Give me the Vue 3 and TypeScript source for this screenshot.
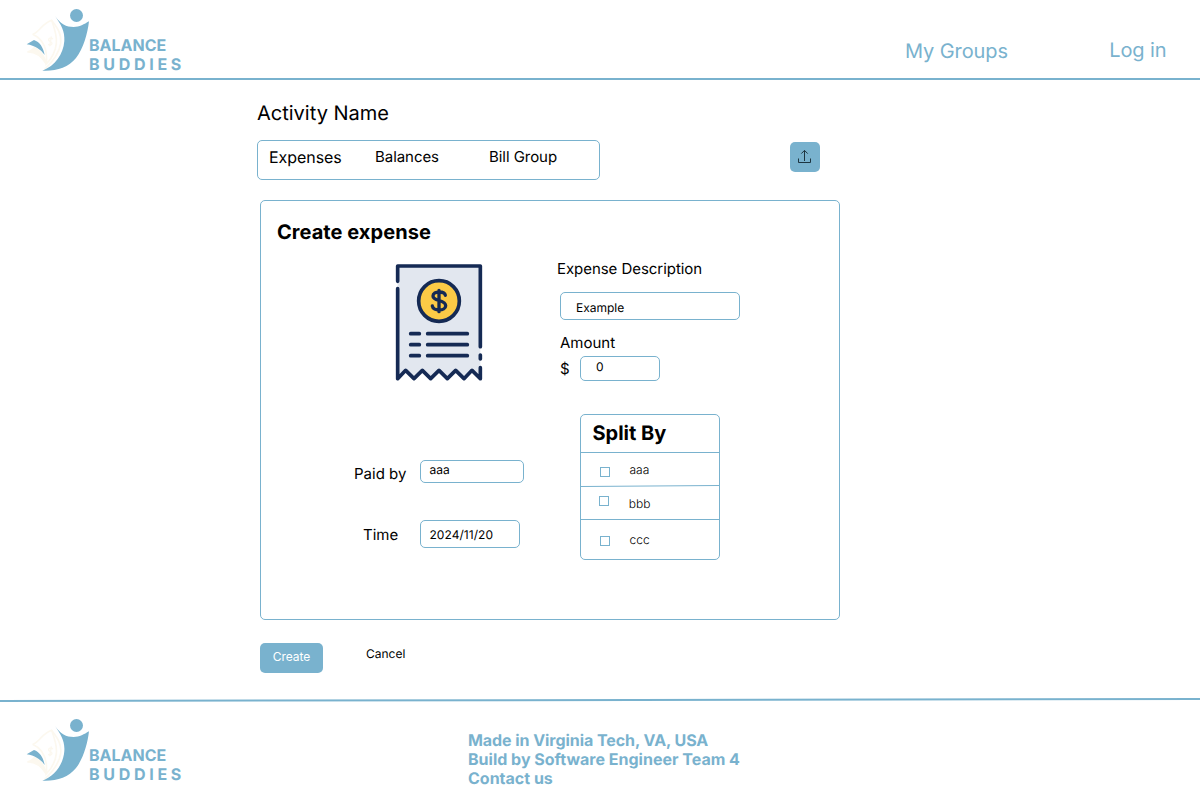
<script setup lang="ts">
import { defineComponent, h, ref } from 'vue'

interface Member {
  name: string
  row: string
}

const tabs: { label: string; key: string }[] = [
  { label: 'Expenses', key: 'expenses' },
  { label: 'Balances', key: 'balances' },
  { label: 'Bill Group', key: 'bill-group' },
]
const members: Member[] = [
  { name: 'aaa', row: 'first' },
  { name: 'bbb', row: 'second' },
  { name: 'ccc', row: 'third' },
]
const footerLines: string[] = [
  'Made in Virginia Tech, VA, USA',
  'Build by Software Engineer Team 4',
  'Contact us',
]
const description = ref('Example')
const amount = ref('0')
const payer = ref('aaa')
const date = ref('2024/11/20')

const cream = { fill: 'none', stroke: '#fcf8ef', 'stroke-width': 5 }
const LogoMark = defineComponent({
  render: () =>
    h('svg', { width: 69, height: 78, viewBox: '0 0 207 234' }, [
      h('path', { ...cream, d: 'M38 103C58 97 64 72 95 61C106 76 126 98 122 130C118 160 98 185 74 208' }),
      h('path', { ...cream, d: 'M38 103C64 115 84 140 79 192C98 172 107 151 109 130C112 108 103 84 95 61' }),
      h('path', { ...cream, d: 'M22 156C34 154 38 147 43 143C58 149 73 165 79 192C63 166 45 155 22 156Z', fill: '#fcf8ef' }),
      h('path', { ...cream, 'stroke-width': 4, d: 'M99 117C89 109 80 120 90 124C101 128 95 140 84 133M94 109L89 139' }),
      h('path', { fill: '#79b2ce', d: 'M20 133L42 120C59 126 70 142 74 165C62 148 45 137 20 133Z' }),
      h('circle', { fill: '#79b2ce', cx: 169.5, cy: 46.5, r: 19.5 }),
      h('path', {
        fill: '#79b2ce',
        d: 'M105 48C121 72 139 81 161 81C179 81 192 73 207 64C203 101 190 146 168 174C145 203 108 214 67 212C105 198 130 163 133 123C135 93 123 74 105 48Z',
      }),
    ]),
})
</script>

<template>
  <div class="page">
    <header class="header">
      <div class="brand">
        <LogoMark />
        <div class="brand-name"><span class="balance">BALANCE</span><span class="buddies">BUDDIES</span></div>
      </div>
      <nav class="nav">
        <a class="groups">My Groups</a>
        <a class="login">Log in</a>
      </nav>
    </header>

    <main class="main">
      <h1 class="activity">Activity Name</h1>
      <div class="toolbar">
        <div class="tabs">
          <span v-for="tab in tabs" :key="tab.key" :class="['tab', tab.key]">{{ tab.label }}</span>
        </div>
        <button class="share" aria-label="Share">
          <svg width="30" height="30" viewBox="0 0 30 30" fill="none" stroke="#1d3541" stroke-width="1">
            <path d="M14.5 19V8.5M11.3 11.6L14.5 8.4L17.7 11.6M8.5 16.5V20.5H20.5V16.5" />
          </svg>
        </button>
      </div>

      <section class="card">
        <h2 class="title">Create expense</h2>
        <div class="columns">
          <div class="left">
            <svg class="receipt" width="110" height="135" viewBox="0 0 330 405" fill="none" stroke="#152a54" stroke-width="11" stroke-linecap="round" stroke-linejoin="round">
              <path fill="#e2e7ef" stroke="none" d="M38 33H286V371L261 346L237 371L212 346L187 371L162 346L137 371L112 346L87 371L62 346L38 371Z" />
              <path d="M38 79V33H286V275M286 300V312M286 338V371L261 346L237 371L212 346L187 371L162 346L137 371L112 346L87 371L62 346L38 371V101" />
              <circle cx="162" cy="138" r="61" fill="#fbca46" />
              <path stroke-width="10" d="M181 121C179 108 144 107 144 123C144 140 182 133 182 152C182 169 144 169 142 153M162 106V170" />
              <path d="M77 236H103M128 236H247M77 269H103M128 269H247M77 302H103M128 302H247" />
            </svg>
            <div class="field paid">
              <span class="label">Paid by</span>
              <div class="box payer">{{ payer }}</div>
            </div>
            <div class="field time">
              <span class="label">Time</span>
              <div class="box date">{{ date }}</div>
            </div>
          </div>
          <div class="right">
            <span class="label description-label">Expense Description</span>
            <div class="box description">{{ description }}</div>
            <span class="label amount-label">Amount</span>
            <div class="amount-row">
              <span class="label">$</span>
              <div class="box amount">{{ amount }}</div>
            </div>
            <div class="split">
              <h3 class="split-title">Split By</h3>
              <div v-for="member in members" :key="member.name" :class="['member', member.row]">
                <svg v-if="member.row === 'second'" class="divider" width="138" height="2" viewBox="0 0 138 2">
                  <path d="M0 1.5L138 .5" stroke="#79b2ce" />
                </svg>
                <i class="check"></i>
                <span class="member-name">{{ member.name }}</span>
              </div>
            </div>
          </div>
        </div>
      </section>

      <div class="actions">
        <button class="create">Create</button>
        <a class="cancel">Cancel</a>
      </div>
    </main>

    <footer class="footer">
      <svg class="rule" width="1200" height="4" viewBox="0 0 1200 4">
        <path d="M0 3L1200 1" stroke="#79b2ce" stroke-width="2" />
      </svg>
      <div class="footer-content">
        <div class="brand">
          <LogoMark />
          <div class="brand-name"><span class="balance">BALANCE</span><span class="buddies">BUDDIES</span></div>
        </div>
        <div class="footer-text">
          <span v-for="line in footerLines" :key="line">{{ line }}</span>
        </div>
      </div>
    </footer>
  </div>
</template>

<style>
body {
  margin: 0;
  background: #fff;
}
</style>

<style scoped>
* {
  box-sizing: border-box;
}
.page {
  width: 1200px;
  height: 800px;
  overflow: hidden;
  display: flex;
  flex-direction: column;
  background: #fff;
  color: #000;
  font-family: Inter, sans-serif;
  text-rendering: geometricPrecision;
}
svg {
  display: block;
  flex: none;
}
h1,
h2,
h3 {
  margin: 0;
}
button {
  border: 0;
  padding: 0;
  font-family: inherit;
}
.header {
  height: 80px;
  flex: none;
  display: flex;
  justify-content: space-between;
  border-bottom: 2px solid #79b2ce;
}
.brand {
  display: flex;
  padding-left: 20px;
  height: 78px;
}
.brand-name {
  display: flex;
  flex-direction: column;
  padding-top: 36px;
  color: #79b2ce;
  font-size: 16px;
  line-height: 19px;
  font-weight: 700;
}
.buddies {
  letter-spacing: 3.7px;
}
.nav {
  display: flex;
  justify-content: space-between;
  width: 295px;
  padding: 38px 33.5px 0 0;
  color: #79b2ce;
  font-size: 20px;
  line-height: 24px;
  font-weight: 400;
  letter-spacing: -0.1px;
}
.groups {
  padding-top: 1px;
}
.main {
  width: 583px;
  height: 618px;
  flex: none;
  margin-left: 257px;
  display: flex;
  flex-direction: column;
}
.activity {
  margin-top: 21px;
  font-size: 20px;
  line-height: 24px;
  font-weight: 400;
}
.toolbar {
  display: flex;
  justify-content: space-between;
  margin-top: 15px;
  padding-right: 20px;
}
.tabs {
  display: flex;
  width: 343px;
  height: 40px;
  border: 1px solid #79b2ce;
  border-radius: 5px;
  padding: 7px 0 0 11px;
  font-size: 15px;
  line-height: 18px;
  letter-spacing: -0.05px;
}
.tab.expenses {
  width: 106px;
  font-size: 16px;
  line-height: 19px;
}
.tab.balances {
  width: 114px;
}
.share {
  margin-top: 2px;
  width: 30px;
  height: 30px;
  border-radius: 5px;
  background: #79b2ce;
}
.card {
  margin: 20px 0 0 3px;
  width: 580px;
  height: 420px;
  border: 1px solid #79b2ce;
  border-radius: 5px;
  padding: 19px 0 0 16px;
}
.title,
.split-title {
  font-size: 20px;
  line-height: 24px;
  font-weight: 700;
}
.title {
  letter-spacing: 0.05px;
}
.columns {
  display: flex;
}
.left {
  width: 280px;
  padding-top: 11px;
}
.receipt {
  margin-left: 108px;
}
.label {
  font-size: 15px;
  line-height: 18px;
}
.description-label {
  letter-spacing: -0.05px;
}
.box {
  border: 1px solid #79b2ce;
  border-radius: 5px;
  font-size: 12px;
  line-height: 14px;
}
.field {
  display: flex;
  justify-content: flex-start;
}
.paid {
  margin: 70px 0 0 77px;
}
.field .label {
  width: 66px;
  padding-top: 5px;
}
.payer {
  width: 104px;
  height: 23px;
  padding: 2px 0 0 8.5px;
}
.time {
  margin: 37px 0 0 86px;
}
.time .label {
  width: 57px;
  padding-top: 6px;
}
.date {
  width: 100px;
  height: 28px;
  padding: 7px 0 0 8.5px;
  letter-spacing: 0.05px;
}
.right {
  display: flex;
  flex-direction: column;
  padding-top: 16px;
}
.description {
  margin: 14px 0 0 3px;
  width: 180px;
  height: 28px;
  padding: 8px 0 0 15px;
}
.amount-label {
  margin: 14px 0 0 3px;
}
.amount-row {
  display: flex;
  margin: 4px 0 0 3px;
}
.amount-row .label {
  width: 20px;
  padding-top: 4px;
}
.amount {
  width: 80px;
  height: 25px;
  padding: 3px 0 0 15px;
}
.split {
  margin: 33px 0 0 23px;
  width: 140px;
  height: 146px;
  border: 1px solid #79b2ce;
  border-radius: 5px;
}
.split-title {
  height: 38px;
  padding: 6px 0 0 11.5px;
  border-bottom: 1px solid #79b2ce;
}
.member {
  position: relative;
  display: flex;
  font-size: 12px;
  line-height: 14px;
  font-weight: 300;
}
.divider {
  position: absolute;
  left: 0;
  top: 0;
}
.check {
  width: 10px;
  height: 10px;
  border: 1px solid #79b2ce;
}
.first {
  height: 32px;
  padding: 10px 0 0 19px;
  gap: 19.5px;
}
.first .check {
  margin-top: 4px;
}
.second {
  height: 35px;
  padding: 11px 0 0 18px;
  gap: 19.8px;
  border-bottom: 1px solid #79b2ce;
}
.second .member-name {
  margin-top: 1px;
}
.third {
  padding: 13px 0 0 19px;
  gap: 19.5px;
}
.third .check {
  margin-top: 3px;
}
.actions {
  display: flex;
  margin: 23px 0 0 3px;
  font-size: 12px;
  line-height: 14px;
}
.create {
  width: 63px;
  height: 30px;
  padding-bottom: 2px;
  border-radius: 5px;
  background: #79b2ce;
  color: #fff;
  font-size: 12px;
  line-height: 14px;
  font-weight: 400;
}
.cancel {
  margin: 4px 0 0 43px;
}
.footer {
  display: flex;
  flex-direction: column;
}
.footer-content {
  display: flex;
  padding-top: 8px;
}
.footer .brand {
  width: 468px;
}
.footer-text {
  display: flex;
  flex-direction: column;
  padding-top: 21px;
  color: #79b2ce;
  font-size: 16px;
  line-height: 19px;
  font-weight: 700;
}
.footer-text span:first-child {
  letter-spacing: -0.06px;
}
</style>
